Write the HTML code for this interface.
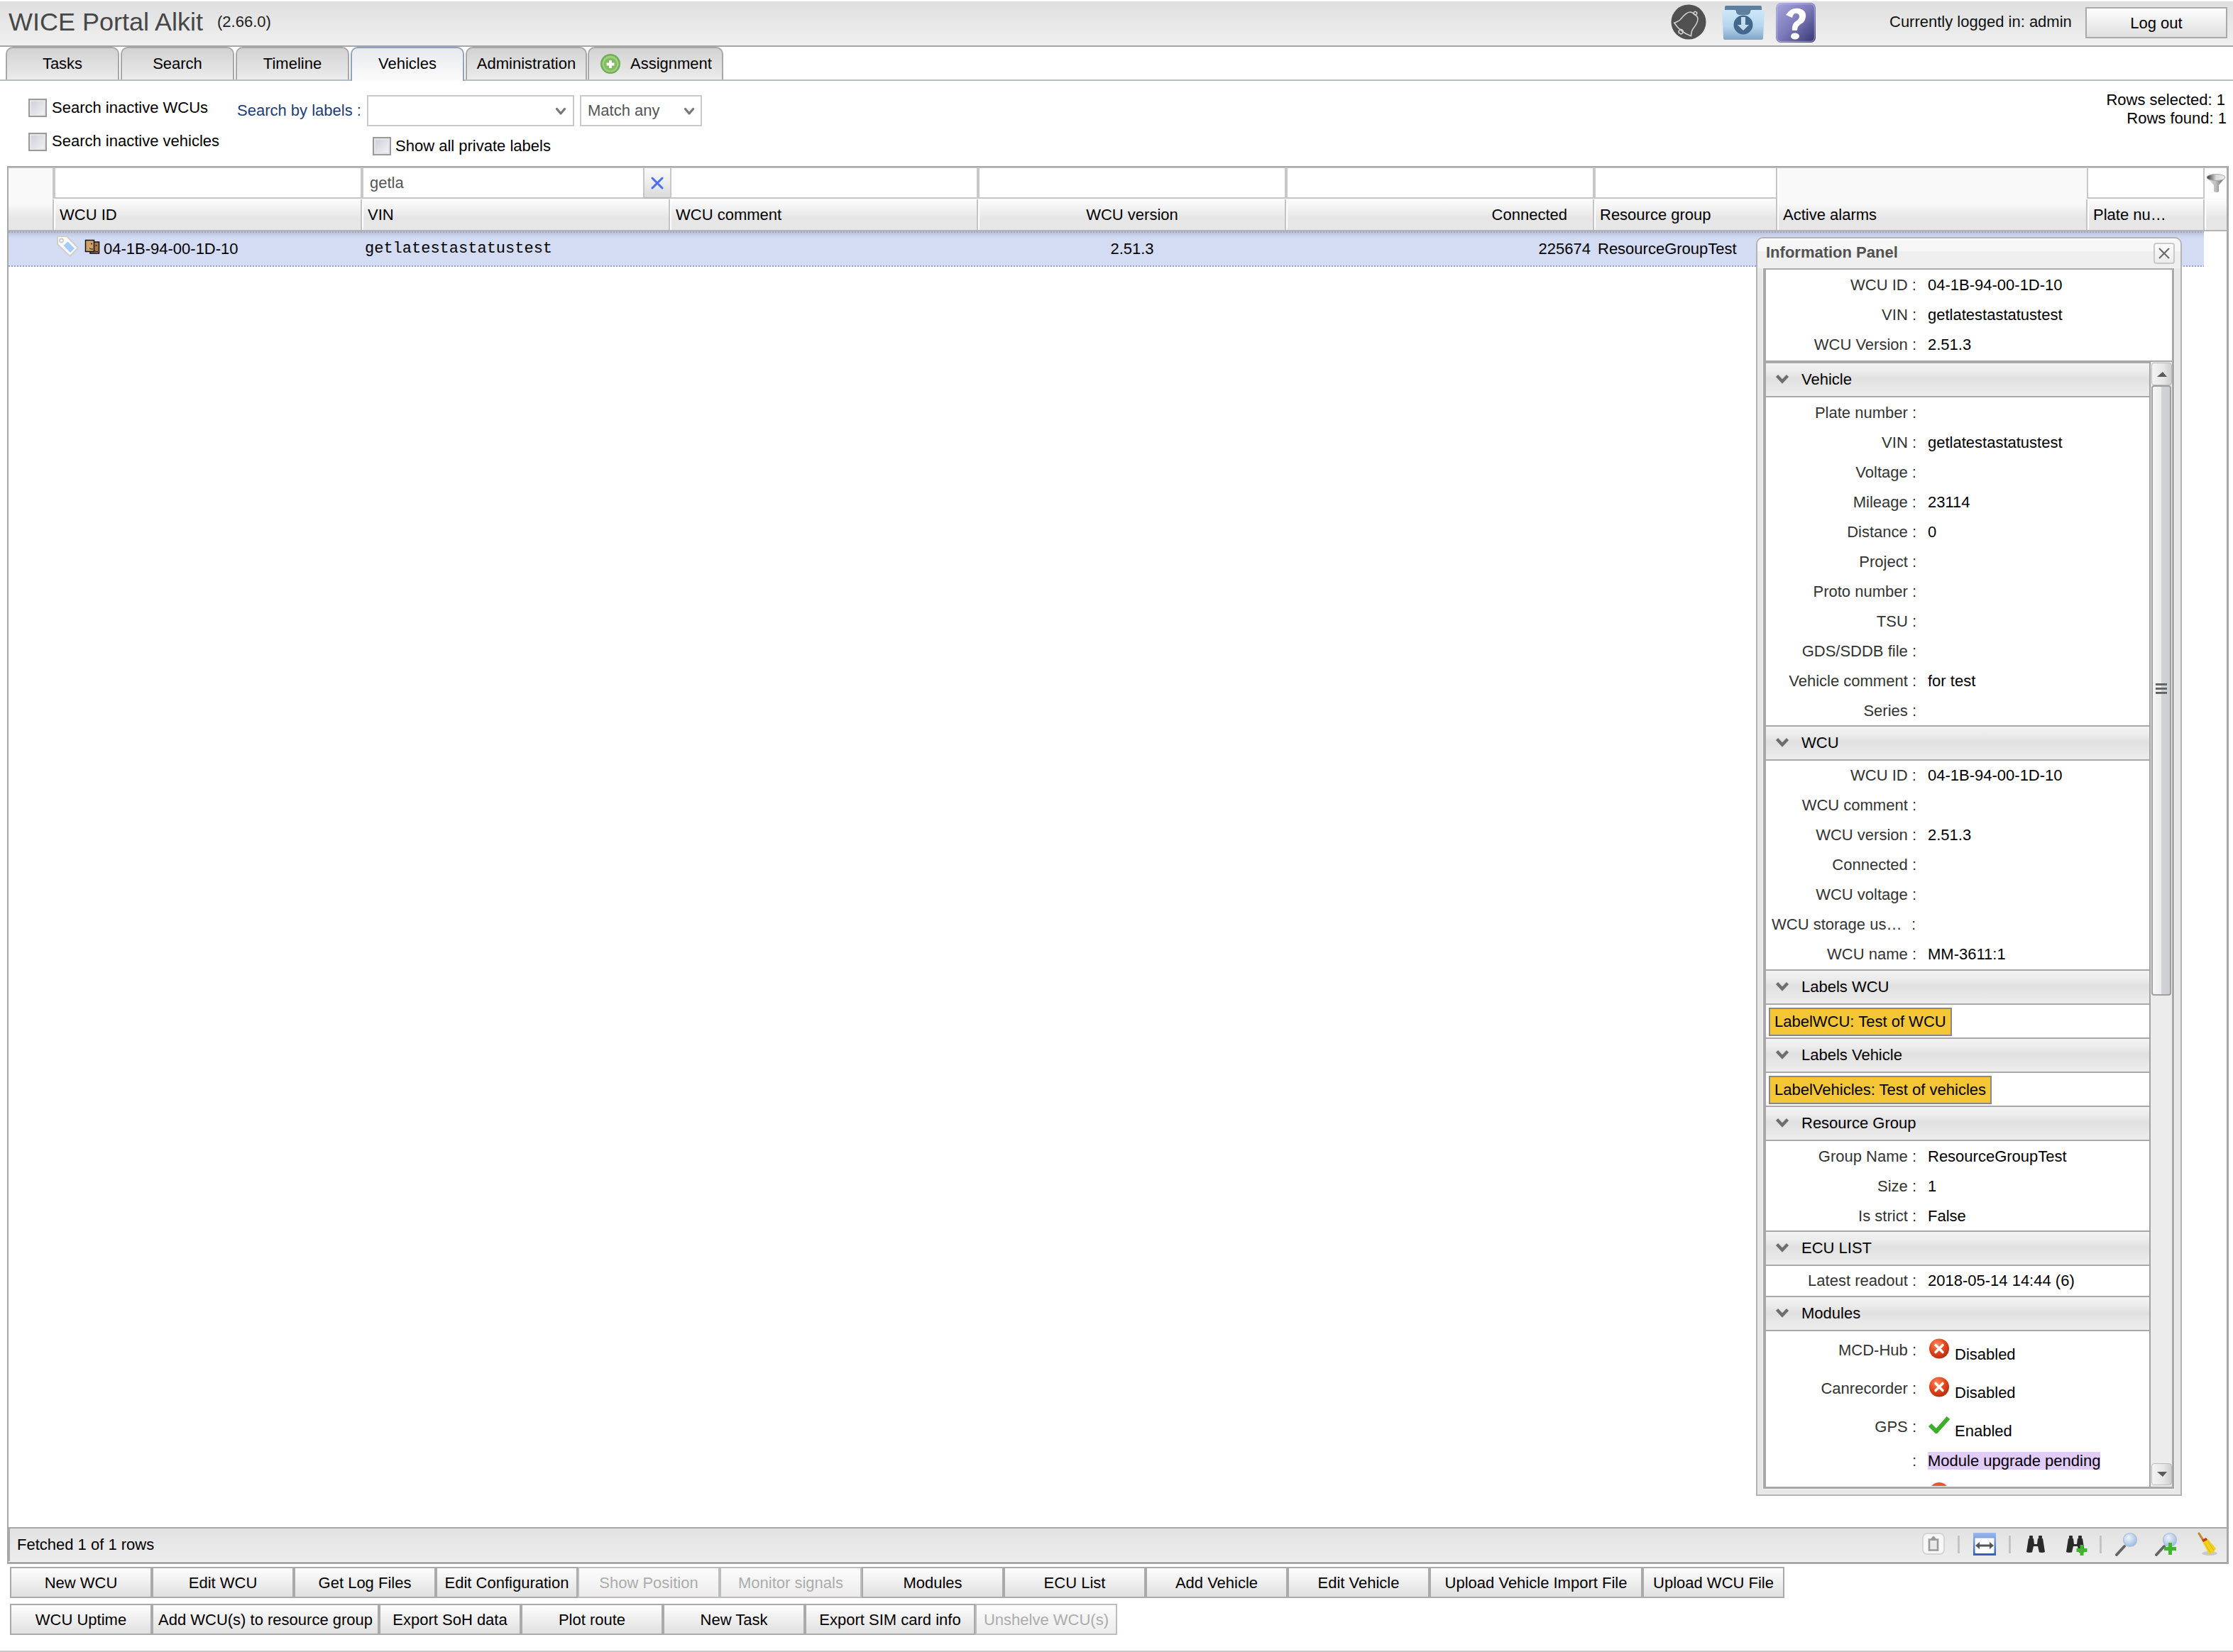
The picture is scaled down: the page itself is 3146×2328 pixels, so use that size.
<!DOCTYPE html>
<html><head><meta charset="utf-8">
<style>
*{box-sizing:border-box;margin:0;padding:0}
html,body{width:3146px;height:2328px;overflow:hidden;background:#fff;font-family:"Liberation Sans",sans-serif;font-size:22px;color:#000;position:relative}
.a{position:absolute}
.t{position:absolute;white-space:nowrap;line-height:26px;height:26px}
/* title bar */
#tb{left:0;top:0;width:3146px;height:66px;background:linear-gradient(#fdfdfd 0,#fdfdfd 2px,#dfdfdf 2px,#f0f0f0 64px);border-bottom:2px solid #a6a6a6}
.btn{position:absolute;border:2px solid #a9a9a9;background:linear-gradient(#fefefe,#dfdfdf);text-align:center;line-height:42px;white-space:nowrap}
/* tabs */
.tab{position:absolute;top:66px;height:46px;border:2px solid #a8a8a8;border-bottom:none;border-radius:10px 10px 0 0;background:linear-gradient(#d2d2d2,#ececec);text-align:center;line-height:44px;color:#000}
.tab.sel{background:linear-gradient(#e9eaee,#fbfbfb);border-color:#8ea3c3;height:48px;z-index:3}
#tabline{left:0;top:112px;width:3146px;height:2px;background:#b8bcc4;z-index:2}
.cb{position:absolute;width:26px;height:26px;border:2px solid #9a9a9a;background:linear-gradient(135deg,#c9ced8,#f4f4f4);box-shadow:inset 0 0 0 2px #e6e6e6}
.combo{position:absolute;border:2px solid #c9c9c9;background:#fff}

.fc{position:absolute;top:237px;height:43px;background:#fff;border-left:4px solid #c8c8c8;border-bottom:2px solid #c6c6c6}
.hc{position:absolute;top:281px;height:43px;background:linear-gradient(#fbfbfb 0,#f6f6f6 8px,#e6e6e6 26px,#e6e6e6 44px);border-left:2px solid #c4c4c4;box-shadow:inset 2px 0 0 #fff;line-height:44px;padding-left:8px;white-space:nowrap;overflow:hidden}

#ip{left:2474px;top:334px;width:600px;height:1774px;border:2px solid #b3b3b3;border-radius:10px 10px 0 0;background:#e8e8e8}
#iphd{left:2476px;top:336px;width:596px;height:42px;border-radius:8px 8px 0 0;background:linear-gradient(#fdfdfd 0,#f7f7f7 3px,#f7f7f7 18px,#efefef 18px,#efefef 42px)}
.lb{position:absolute;left:2488px;width:212px;text-align:right;color:#333;white-space:nowrap;line-height:26px;height:26px}
.vl{position:absolute;left:2716px;white-space:nowrap;line-height:26px;height:26px}
.sh{position:absolute;left:2488px;width:540px;height:50px;border-top:2px solid #a9a9a9;border-bottom:2px solid #a9a9a9;background:linear-gradient(#f3f3f3 0,#ededed 10px,#e0e0e0 22px,#e8e8e8 34px,#ececec 46px)}
.sh span{position:absolute;left:50px;top:10px;line-height:26px}
.sh svg{position:absolute;left:12px;top:14px}
.chip{position:absolute;left:2492px;height:40px;border:2px solid #888;background:#f4c535;line-height:35px;padding:0 6px;white-space:nowrap}
.bb{position:absolute;height:44px;border:2px solid #aaa;background:linear-gradient(#fdfdfd,#e0e0e0);text-align:center;line-height:41px;white-space:nowrap}
.bb.dis{color:#acacac;border-color:#bdbdbd;border-bottom-color:#c6b9bb;background:linear-gradient(#fcfcfc,#ececec)}
</style></head><body>
<div id="tb" class="a"></div>
<div class="t" style="left:12px;top:11px;font-size:36px;line-height:40px;height:40px;color:#474747;transform:scaleY(0.96);transform-origin:0 32px">WICE Portal Alkit</div>
<div class="t" style="left:306px;top:18px;color:#222">(2.66.0)</div>
<div class="t" style="left:2662px;top:18px;color:#111">Currently logged in: admin</div>
<div class="btn" style="left:2938px;top:10px;width:200px;height:44px">Log out</div>

<div id="tabline" class="a"></div>
<div class="tab" style="left:8px;width:160px">Tasks</div>
<div class="tab" style="left:170px;width:160px">Search</div>
<div class="tab" style="left:332px;width:160px">Timeline</div>
<div class="tab sel" style="left:494px;width:160px">Vehicles</div>
<div class="tab" style="left:656px;width:171px">Administration</div>
<div class="tab" style="left:828px;width:191px;text-align:left;padding-left:58px">Assignment</div>

<div class="cb" style="left:40px;top:139px"></div>
<div class="t" style="left:73px;top:139px">Search inactive WCUs</div>
<div class="cb" style="left:40px;top:187px"></div>
<div class="t" style="left:73px;top:186px">Search inactive vehicles</div>
<div class="t" style="left:334px;top:143px;color:#1e3c78">Search by labels :</div>
<div class="combo" style="left:517px;top:134px;width:292px;height:44px"></div>
<div class="combo" style="left:817px;top:134px;width:172px;height:44px"></div>
<div class="t" style="left:828px;top:143px;color:#555">Match any</div>
<div class="cb" style="left:525px;top:193px"></div>
<div class="t" style="left:557px;top:193px">Show all private labels</div>
<div class="t" style="left:2705px;top:128px;width:430px;text-align:right">Rows selected: 1</div>
<div class="t" style="left:2707px;top:154px;width:430px;text-align:right">Rows found: 1</div>


<!-- GRID -->
<div class="a" style="left:10px;top:234px;width:3130px;height:1970px;border:2px solid #a8a8a8;border-right-width:3px;border-bottom-width:3px;background:#fff"></div>
<!-- header backgrounds spanning both rows -->
<div class="a" style="left:12px;top:236px;width:3125px;height:88px;background:linear-gradient(#f9f9f9 0,#f9f9f9 52px,#f2f2f2 58px,#e6e6e6 72px,#e6e6e6 88px)"></div>
<div class="a" style="left:3104px;top:236px;width:33px;height:44px;background:#fdfdfd"></div>
<div class="a" style="left:10px;top:234px;width:3130px;height:2px;background:#a8a8a8;z-index:1"></div>
<div class="a" style="left:12px;top:236px;width:3125px;height:1px;background:#c9c9c9;z-index:1"></div>
<div class="fc" style="left:74px;width:434px"></div>
<div class="fc" style="left:508px;width:434px"></div>
<div class="fc" style="left:942px;width:434px"></div>
<div class="fc" style="left:1376px;width:434px"></div>
<div class="fc" style="left:1810px;width:434px"></div>
<div class="fc" style="left:2244px;width:258px"></div>
<div class="fc" style="left:2940px;width:166px;border-left-width:2px;border-right:2px solid #c6c6c6"></div>
<div class="t" style="left:521px;top:245px;color:#555">getla</div>
<div class="a" style="left:906px;top:237px;width:38px;height:43px;border-left:2px solid #c6c6c6;border-bottom:2px solid #b8b8b8;background:linear-gradient(#fafafa,#f0f0f0 40%,#d9d9d9)"></div>
<svg class="a" style="left:916px;top:248px" width="20" height="20" viewBox="0 0 20 20"><path d="M3 3L17 17M17 3L3 17" stroke="#4a6ef2" stroke-width="3" stroke-linecap="round"/></svg>
<div class="hc" style="left:74px;width:434px">WCU ID</div>
<div class="hc" style="left:508px;width:434px">VIN</div>
<div class="hc" style="left:942px;width:434px">WCU comment</div>
<div class="hc" style="left:1376px;width:434px;text-align:center;padding:0 0 0 2px">WCU version</div>
<div class="hc" style="left:1810px;width:434px;text-align:right;padding-right:36px">Connected</div>
<div class="hc" style="left:2244px;width:258px">Resource group</div>
<div class="hc" style="left:2502px;width:437px;top:236px;height:88px;line-height:26px;padding-top:54px;background:linear-gradient(#f9f9f9 0,#f9f9f9 52px,#f2f2f2 58px,#e6e6e6 72px,#e6e6e6 88px)">Active alarms</div>
<div class="hc" style="left:2939px;width:165px">Plate nu…</div>
<div class="hc" style="left:3104px;width:33px"></div>
<div class="a" style="left:12px;top:324px;width:3125px;height:2px;background:#b4b4b4"></div>
<!-- data row -->
<div class="a" style="left:12px;top:326px;width:3093px;height:50px;background:linear-gradient(#b6bed2 0,#c4cce2 4px,#d3dcf3 9px)"></div>
<div class="a" style="left:12px;top:326px;width:3093px;height:2px;background:repeating-linear-gradient(90deg,#97a6d4 0 2px,#b7bfd4 2px 4px)"></div>
<div class="a" style="left:12px;top:374px;width:3093px;height:2px;background:repeating-linear-gradient(90deg,#8da3df 0 2px,#e2e7f6 2px 4px)"></div>
<div class="t" style="left:146px;top:338px">04-1B-94-00-1D-10</div>
<div class="t" style="left:514px;top:338px;font-family:'Liberation Mono',monospace">getlatestastatustest</div>
<div class="t" style="left:1378px;top:338px;width:434px;text-align:center">2.51.3</div>
<div class="t" style="left:1810px;top:338px;width:431px;text-align:right">225674</div>
<div class="t" style="left:2251px;top:338px">ResourceGroupTest</div>
<!-- footer -->
<div class="a" style="left:12px;top:2152px;width:3125px;height:48px;border-top:2px solid #a8a8a8;border-left:2px solid #a8a8a8;background:linear-gradient(#e2e2e2,#ededed)"></div>
<div class="t" style="left:24px;top:2164px">Fetched 1 of 1 rows</div>


<!-- title icons -->
<svg class="a" style="left:2352px;top:5px" width="54" height="52" viewBox="0 0 54 52"><circle cx="27" cy="26" r="24.5" fill="#505050"/><g transform="translate(26,27) rotate(38)" fill="none" stroke="#d0d0d0" stroke-width="1.6"><path d="M-4,-15 C-10,-14 -11,-4 -11,2 C-11,6 -13,9 -15,12 Q0,17 15,12 C13,9 11,6 11,2 C11,-4 10,-14 4,-15 Z"/><circle cx="0" cy="-17" r="2.2"/><circle cx="0" cy="16" r="3"/></g></svg>
<svg class="a" style="left:2424px;top:6px" width="64" height="52" viewBox="0 0 64 52"><defs><linearGradient id="fg" x1="0" y1="0" x2="0" y2="1"><stop offset="0" stop-color="#cfe6f7"/><stop offset="0.55" stop-color="#b6d6ef"/><stop offset="1" stop-color="#7fa6c6"/></linearGradient></defs><path d="M6 4 Q6 2 8 2 L56 2 Q58 2 58 4 L58 10 L6 10Z" fill="#5e7f9f"/><path d="M2 8 L20 8 Q22 8 22 10 Q22 12 24 12 L40 12 Q42 12 42 10 Q42 8 44 8 L62 8 L60 48 Q60 50 58 50 L6 50 Q4 50 4 48Z" fill="url(#fg)"/><path d="M22 10 Q22 14 26 15 L38 15 Q42 14 42 10Z" fill="#5e7f9f"/><circle cx="32" cy="29" r="13.5" fill="#44688c"/><path d="M29 18 L35 18 L35 29 L40 29 L32 37 L24 29 L29 29Z" fill="#c4dcef"/></svg>
<svg class="a" style="left:2501px;top:3px" width="58" height="58" viewBox="0 0 58 58"><defs><linearGradient id="hg" x1="0" y1="0" x2="1" y2="1"><stop offset="0" stop-color="#a7a6dc"/><stop offset="0.5" stop-color="#7b79b8"/><stop offset="1" stop-color="#34336e"/></linearGradient></defs><rect x="1" y="1" width="56" height="56" rx="7" fill="url(#hg)"/><rect x="2.5" y="2.5" width="53" height="53" rx="6" fill="none" stroke="#c8c8ee" stroke-opacity="0.5" stroke-width="1.5"/><path d="M15 18 Q22 7 34 9 Q44 11 43 21 Q42 28 36 31 Q31 34 31 40 L24 40 Q23 31 29 27 Q34 24 34 20 Q33 15 28 16 Q25 17 24 22Z" fill="#fff"/><ellipse cx="28" cy="48" rx="6" ry="4.5" fill="#fff"/></svg>
<!-- assignment icon -->
<svg class="a" style="left:845px;top:76px" width="30" height="30" viewBox="0 0 30 30"><circle cx="15" cy="14" r="14" fill="#74ad58"/><circle cx="15" cy="14" r="11.5" fill="#9dd07f"/><circle cx="15" cy="14.5" r="9" fill="#82bb62"/><path d="M9.5 14.5H20.5M15 9V20" stroke="#fff" stroke-width="3.8"/></svg>
<!-- combo chevrons -->
<svg class="a" style="left:782px;top:150px" width="16" height="14" viewBox="0 0 16 14"><path d="M2.5 3.5L8 10L13.5 3.5" fill="none" stroke="#777" stroke-width="3.2" stroke-linecap="round" stroke-linejoin="round"/></svg>
<svg class="a" style="left:963px;top:150px" width="16" height="14" viewBox="0 0 16 14"><path d="M2.5 3.5L8 10L13.5 3.5" fill="none" stroke="#777" stroke-width="3.2" stroke-linecap="round" stroke-linejoin="round"/></svg>
<!-- tag + wcu icons -->
<svg class="a" style="left:78px;top:330px" width="36" height="34" viewBox="0 0 36 34"><path d="M3 3H16L32 19.5L20.5 31L3 14Z" fill="#fafafa" stroke="#cfcfcf" stroke-width="2" stroke-linejoin="round"/><circle cx="8.5" cy="9" r="2.6" fill="none" stroke="#c9c9c9" stroke-width="1.6"/><path d="M12.5 16L17.5 11.5L26 20L21 25Z" fill="#a3cdf8" stroke="#a3cdf8" stroke-width="1.5" stroke-linejoin="round"/></svg>
<svg class="a" style="left:119px;top:337px" width="23" height="23" viewBox="0 0 23 23"><rect x="8" y="4" width="12.5" height="16" fill="#a97b42" stroke="#111" stroke-width="1.5"/><rect x="1.5" y="1.5" width="12" height="16" fill="#cfa367" stroke="#111" stroke-width="1.5"/><circle cx="10" cy="6.5" r="0.9" fill="#111"/><path d="M7 13 Q9 14.5 12 14" fill="none" stroke="#111" stroke-width="1"/><circle cx="16.5" cy="9" r="0.9" fill="#111"/><path d="M14 16.5 Q16 18 19 17.5" fill="none" stroke="#111" stroke-width="1"/></svg>
<!-- funnel -->
<svg class="a" style="left:3106px;top:242px" width="32" height="32" viewBox="0 0 32 32"><defs><linearGradient id="fu" x1="0" y1="0" x2="1" y2="0"><stop offset="0" stop-color="#333"/><stop offset="0.5" stop-color="#d8d8d8"/><stop offset="1" stop-color="#f4f4f4"/></linearGradient><linearGradient id="fu2" x1="0" y1="0" x2="1" y2="0"><stop offset="0" stop-color="#e8e8e8"/><stop offset="0.5" stop-color="#bbb"/><stop offset="1" stop-color="#555"/></linearGradient></defs><path d="M3 8 Q16 1 29 8 L20 19 L20 28 Q17 30 13 28 L13 19Z" fill="url(#fu2)"/><ellipse cx="16" cy="8" rx="13" ry="4.5" fill="url(#fu)" stroke="#aaa" stroke-width="1"/></svg>

<!-- footer icons -->
<div class="a" style="left:2708px;top:2160px;width:32px;height:31px;border:2px solid #d4d4d4;border-radius:7px;background:#f7f7f7"></div>
<svg class="a" style="left:2714px;top:2163px" width="20" height="25" viewBox="0 0 20 25"><path d="M4 6.5H16V21.5H4Z" fill="#e9e9e9" stroke="#9a9a9a" stroke-width="2.6"/><path d="M7 4H13V8H7Z" fill="#9a9a9a"/><circle cx="10" cy="3.5" r="1.8" fill="#9a9a9a"/></svg>
<div class="a" style="left:2758px;top:2164px;width:3px;height:25px;background:#c4c4c4"></div>
<svg class="a" style="left:2780px;top:2160px" width="32" height="32" viewBox="0 0 32 32"><defs><linearGradient id="fw" x1="0" y1="0" x2="0" y2="1"><stop offset="0" stop-color="#9ab8ec"/><stop offset="1" stop-color="#2d5fb5"/></linearGradient></defs><rect x="0" y="0" width="32" height="32" fill="url(#fw)"/><rect x="2.5" y="7.5" width="27" height="21.5" fill="#fbfcfe"/><path d="M3 18L9 13V16.5H23V13L29 18L23 23V19.5H9V23Z" fill="#555"/></svg>
<div class="a" style="left:2830px;top:2164px;width:3px;height:25px;background:#c4c4c4"></div>
<svg class="a" style="left:2854px;top:2163px" width="28" height="26" viewBox="0 0 28 26"><g fill="#2a2a2a"><rect x="5" y="1" width="5" height="4" rx="1"/><rect x="18" y="1" width="5" height="4" rx="1"/><path d="M4 5H11L12 13H16L17 5H24L27 24Q24 25.5 19 24.5L17 16H11L9 24.5Q4 25.5 1 24Z"/></g></svg>
<svg class="a" style="left:2910px;top:2163px" width="34" height="30" viewBox="0 0 34 30"><g fill="#2a2a2a"><rect x="5" y="1" width="5" height="4" rx="1"/><rect x="18" y="1" width="5" height="4" rx="1"/><path d="M4 5H11L12 13H16L17 5H24L27 24Q24 25.5 19 24.5L17 16H11L9 24.5Q4 25.5 1 24Z"/></g><path d="M23 14V29M15.5 21.5H30.5" stroke="#3fb52b" stroke-width="5"/></svg>
<div class="a" style="left:2958px;top:2164px;width:3px;height:25px;background:#c4c4c4"></div>
<svg class="a" style="left:2980px;top:2159px" width="34" height="34" viewBox="0 0 34 34"><defs><radialGradient id="mg" cx="40%" cy="35%" r="65%"><stop offset="0" stop-color="#eef3fa"/><stop offset="1" stop-color="#9fbddf"/></radialGradient></defs><path d="M2 32L13 20" stroke="#666" stroke-width="4" stroke-linecap="round"/><circle cx="21" cy="11" r="9.5" fill="url(#mg)" stroke="#a7bfdc" stroke-width="1.2"/></svg>
<svg class="a" style="left:3036px;top:2159px" width="34" height="34" viewBox="0 0 34 34"><path d="M2 32L13 20" stroke="#666" stroke-width="4" stroke-linecap="round"/><circle cx="21" cy="11" r="9.5" fill="url(#mg)" stroke="#a7bfdc" stroke-width="1.2"/><path d="M21.5 15V32M13 23.5H30" stroke="#3fb52b" stroke-width="5"/></svg>
<svg class="a" style="left:3092px;top:2158px" width="34" height="36" viewBox="0 0 34 36"><ellipse cx="21" cy="31" rx="11" ry="3" fill="#000" fill-opacity="0.15"/><path d="M6 3L13 14" stroke="#c08a2a" stroke-width="3.2" stroke-linecap="round"/><path d="M10 13L17 9L30 24Q27 31 20 32Q15 22 10 13Z" fill="#f0d31e"/><path d="M14 16L22 30M18 13L27 27" stroke="#d9b514" stroke-width="1"/><path d="M10 12L16 9L18 12L12 15Z" fill="#c8342a"/></svg>
<!-- INFO PANEL -->
<div id="ip" class="a"></div><div id="iphd" class="a"></div>
<div class="t" style="left:2488px;top:343px;font-weight:bold;color:#515151">Information Panel</div>
<div class="a" style="left:3034px;top:342px;width:30px;height:30px;border:2px solid #c9c9c9;border-radius:4px;background:linear-gradient(#fdfdfd,#ececec)"></div>
<svg class="a" style="left:3038px;top:346px" width="22" height="22" viewBox="0 0 22 22"><path d="M4 4L18 18M18 4L4 18" stroke="#6b6b6b" stroke-width="2.2"/></svg>
<div class="a" style="left:2484px;top:378px;width:579px;height:1720px;border-left:4px solid #a8a8a8;border-right:3px solid #a8a8a8;border-top:2px solid #a8a8a8;border-bottom:3px solid #a8a8a8;background:#fff;box-shadow:0 0 0 1px #f4f4f4"></div>
<div class="lb" style="top:389px">WCU ID :</div><div class="vl" style="top:389px">04-1B-94-00-1D-10</div>
<div class="lb" style="top:431px">VIN :</div><div class="vl" style="top:431px">getlatestastatustest</div>
<div class="lb" style="top:473px">WCU Version :</div><div class="vl" style="top:473px">2.51.3</div>
<div class="a" style="left:2487px;top:508px;width:573px;height:2px;background:#a8a8a8"></div>
<div class="sh" style="top:510px"><svg width="22" height="16" viewBox="0 0 22 16"><path d="M3.5 3.5L11 11.5L18.5 3.5" fill="none" stroke="#6e6e6e" stroke-width="4.4"/></svg><span>Vehicle</span></div>
<div class="lb" style="top:569px">Plate number :</div>
<div class="lb" style="top:611px">VIN :</div><div class="vl" style="top:611px">getlatestastatustest</div>
<div class="lb" style="top:653px">Voltage :</div>
<div class="lb" style="top:695px">Mileage :</div><div class="vl" style="top:695px">23114</div>
<div class="lb" style="top:737px">Distance :</div><div class="vl" style="top:737px">0</div>
<div class="lb" style="top:779px">Project :</div>
<div class="lb" style="top:821px">Proto number :</div>
<div class="lb" style="top:863px">TSU :</div>
<div class="lb" style="top:905px">GDS/SDDB file :</div>
<div class="lb" style="top:947px">Vehicle comment :</div><div class="vl" style="top:947px">for test</div>
<div class="lb" style="top:989px">Series :</div>
<div class="sh" style="top:1022px"><svg width="22" height="16" viewBox="0 0 22 16"><path d="M3.5 3.5L11 11.5L18.5 3.5" fill="none" stroke="#6e6e6e" stroke-width="4.4"/></svg><span>WCU</span></div>
<div class="lb" style="top:1080px">WCU ID :</div><div class="vl" style="top:1080px">04-1B-94-00-1D-10</div>
<div class="lb" style="top:1122px">WCU comment :</div>
<div class="lb" style="top:1164px">WCU version :</div><div class="vl" style="top:1164px">2.51.3</div>
<div class="lb" style="top:1206px">Connected :</div>
<div class="lb" style="top:1248px">WCU voltage :</div>
<div class="lb" style="top:1290px;left:2496px;width:auto;text-align:left">WCU storage us…</div><div class="lb" style="top:1290px;left:2600px;width:99px">:</div>
<div class="lb" style="top:1332px">WCU name :</div><div class="vl" style="top:1332px">MM-3611:1</div>
<div class="sh" style="top:1366px"><svg width="22" height="16" viewBox="0 0 22 16"><path d="M3.5 3.5L11 11.5L18.5 3.5" fill="none" stroke="#6e6e6e" stroke-width="4.4"/></svg><span>Labels WCU</span></div>
<div class="chip" style="top:1420px">LabelWCU: Test of WCU</div>
<div class="sh" style="top:1462px"><svg width="22" height="16" viewBox="0 0 22 16"><path d="M3.5 3.5L11 11.5L18.5 3.5" fill="none" stroke="#6e6e6e" stroke-width="4.4"/></svg><span>Labels Vehicle</span></div>
<div class="chip" style="top:1516px">LabelVehicles: Test of vehicles</div>
<div class="sh" style="top:1558px"><svg width="22" height="16" viewBox="0 0 22 16"><path d="M3.5 3.5L11 11.5L18.5 3.5" fill="none" stroke="#6e6e6e" stroke-width="4.4"/></svg><span>Resource Group</span></div>
<div class="lb" style="top:1617px">Group Name :</div><div class="vl" style="top:1617px">ResourceGroupTest</div>
<div class="lb" style="top:1659px">Size :</div><div class="vl" style="top:1659px">1</div>
<div class="lb" style="top:1701px">Is strict :</div><div class="vl" style="top:1701px">False</div>
<div class="sh" style="top:1734px"><svg width="22" height="16" viewBox="0 0 22 16"><path d="M3.5 3.5L11 11.5L18.5 3.5" fill="none" stroke="#6e6e6e" stroke-width="4.4"/></svg><span>ECU LIST</span></div>
<div class="lb" style="top:1792px">Latest readout :</div><div class="vl" style="top:1792px">2018-05-14 14:44 (6)</div>
<div class="sh" style="top:1826px"><svg width="22" height="16" viewBox="0 0 22 16"><path d="M3.5 3.5L11 11.5L18.5 3.5" fill="none" stroke="#6e6e6e" stroke-width="4.4"/></svg><span>Modules</span></div>
<div class="lb" style="top:1890px">MCD-Hub :</div>
<svg class="a" style="left:2717px;top:1886px" width="30" height="30" viewBox="0 0 30 30"><defs><radialGradient id="rg1" cx="40%" cy="30%" r="70%"><stop offset="0" stop-color="#ff8a5c"/><stop offset="0.6" stop-color="#e0441c"/><stop offset="1" stop-color="#b8300f"/></radialGradient></defs><circle cx="15" cy="14.5" r="14" fill="url(#rg1)"/><path d="M10 9.5L20 19.5M20 9.5L10 19.5" stroke="#fff" stroke-width="3.6" stroke-linecap="round"/></svg>
<div class="vl" style="left:2754px;top:1896px">Disabled</div>
<div class="lb" style="top:1944px">Canrecorder :</div>
<svg class="a" style="left:2717px;top:1940px" width="30" height="30" viewBox="0 0 30 30"><defs><radialGradient id="rg2" cx="40%" cy="30%" r="70%"><stop offset="0" stop-color="#ff8a5c"/><stop offset="0.6" stop-color="#e0441c"/><stop offset="1" stop-color="#b8300f"/></radialGradient></defs><circle cx="15" cy="14.5" r="14" fill="url(#rg2)"/><path d="M10 9.5L20 19.5M20 9.5L10 19.5" stroke="#fff" stroke-width="3.6" stroke-linecap="round"/></svg>
<div class="vl" style="left:2754px;top:1950px">Disabled</div>
<div class="lb" style="top:1998px">GPS :</div>
<svg class="a" style="left:2717px;top:1994px" width="30" height="26" viewBox="0 0 30 26"><path d="M2 14L11 23L28 4" fill="none" stroke="#3cae2a" stroke-width="6"/></svg>
<div class="vl" style="left:2754px;top:2004px">Enabled</div>
<div class="lb" style="top:2046px">:</div>
<div class="vl" style="top:2046px;height:25px;line-height:25px;background:#e2ccfb">Module upgrade pending</div>
<svg class="a" style="left:2717px;top:2089px" width="30" height="5" viewBox="0 0 30 5"><ellipse cx="15" cy="14" rx="14" ry="14" fill="#e05a34"/></svg>
<div class="a" style="left:3028px;top:510px;width:32px;height:1585px;border-left:2px solid #a3a3a3;background:#ececec"></div>
<div class="a" style="left:3031px;top:511px;width:29px;height:32px;border:1px solid #b9b9b9;border-radius:4px;background:linear-gradient(90deg,#f4f4f4,#e6e6e6 60%,#cfcfcf)"></div>
<svg class="a" style="left:3038px;top:521px" width="16" height="12" viewBox="0 0 16 12"><path d="M1 10L9 3L15 10Z" fill="#5a5a5a"/></svg>
<div class="a" style="left:3031px;top:543px;width:28px;height:860px;border:2px solid #9f9f9f;border-radius:4px;background:linear-gradient(90deg,#f7f7f7,#ececec 50%,#d2d3d6 52%,#cdced2)"></div>
<div class="a" style="left:3037px;top:963px;width:16px;height:18px;background:repeating-linear-gradient(#555 0,#777 3px,transparent 3px,transparent 6px)"></div>
<div class="a" style="left:3031px;top:2062px;width:29px;height:31px;border:1px solid #b9b9b9;border-radius:4px;background:linear-gradient(90deg,#f4f4f4,#e6e6e6 60%,#cfcfcf)"></div>
<svg class="a" style="left:3038px;top:2072px" width="16" height="12" viewBox="0 0 16 12"><path d="M1 2L15 2L9 9Z" fill="#5a5a5a"/></svg>
<div class="bb" style="left:14px;top:2208px;width:200px">New WCU</div>
<div class="bb" style="left:214px;top:2208px;width:200px">Edit WCU</div>
<div class="bb" style="left:414px;top:2208px;width:200px">Get Log Files</div>
<div class="bb" style="left:614px;top:2208px;width:200px">Edit Configuration</div>
<div class="bb dis" style="left:814px;top:2208px;width:200px">Show Position</div>
<div class="bb dis" style="left:1014px;top:2208px;width:200px">Monitor signals</div>
<div class="bb" style="left:1214px;top:2208px;width:200px">Modules</div>
<div class="bb" style="left:1414px;top:2208px;width:200px">ECU List</div>
<div class="bb" style="left:1614px;top:2208px;width:200px">Add Vehicle</div>
<div class="bb" style="left:1814px;top:2208px;width:200px">Edit Vehicle</div>
<div class="bb" style="left:2014px;top:2208px;width:300px">Upload Vehicle Import File</div>
<div class="bb" style="left:2314px;top:2208px;width:200px">Upload WCU File</div>
<div class="bb" style="left:14px;top:2260px;width:200px">WCU Uptime</div>
<div class="bb" style="left:214px;top:2260px;width:320px">Add WCU(s) to resource group</div>
<div class="bb" style="left:534px;top:2260px;width:200px">Export SoH data</div>
<div class="bb" style="left:734px;top:2260px;width:200px">Plot route</div>
<div class="bb" style="left:934px;top:2260px;width:200px">New Task</div>
<div class="bb" style="left:1134px;top:2260px;width:240px">Export SIM card info</div>
<div class="bb dis" style="left:1374px;top:2260px;width:200px">Unshelve WCU(s)</div>
<div class="a" style="left:0;top:2326px;width:3146px;height:2px;background:#c8c8c8"></div>
</body></html>
